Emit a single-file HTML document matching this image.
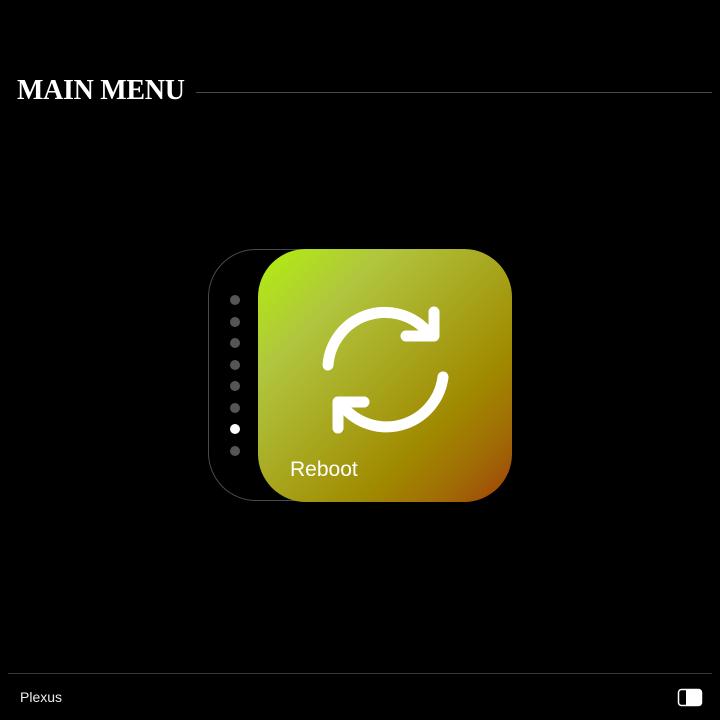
<!DOCTYPE html>
<html><head><meta charset="utf-8"><style>
html,body{margin:0;padding:0;background:#000;width:720px;height:720px;overflow:hidden;position:relative}
.title{position:absolute;left:17px;top:74px;font-family:"Liberation Serif",serif;font-weight:bold;font-size:28px;color:#fff;letter-spacing:-0.3px;line-height:34px}
.hl{position:absolute;left:196px;top:92px;width:516px;height:1px;background:#4a4a4a}
.back{position:absolute;left:208px;top:249px;width:160px;height:252px;border:1px solid #4a4a4a;border-radius:48px;box-sizing:border-box}
.dot{position:absolute;left:230px;width:10px;height:10px;border-radius:50%;background:#555}
.front{position:absolute;left:258px;top:249px;width:254px;height:253px;border-radius:48px;
background:linear-gradient(135deg,#b2f00c 0%,#b0c63e 25%,#a8a820 48%,#a08a00 70%,#a06a06 86%,#a03e08 100%)}
.reb{position:absolute;left:290px;top:458px;font-family:"Liberation Sans",sans-serif;font-size:21px;color:#fff}
.fl{position:absolute;left:8px;top:673px;width:704px;height:1px;background:#3a3a3a}
.plex{position:absolute;left:20px;top:689px;font-family:"Liberation Sans",sans-serif;font-size:14px;color:#eee}
</style></head><body>
<div class="title">MAIN MENU</div>
<div class="hl"></div>
<div class="back"></div>
<div class="dot" style="top:295px"></div>
<div class="dot" style="top:317px"></div>
<div class="dot" style="top:338px"></div>
<div class="dot" style="top:360px"></div>
<div class="dot" style="top:381px"></div>
<div class="dot" style="top:403px"></div>
<div class="dot" style="top:424px;background:#fff"></div>
<div class="dot" style="top:446px"></div>
<div class="front"></div>
<svg style="position:absolute;left:0;top:0" width="720" height="720">
<g fill="none" stroke="#fff" stroke-width="11" stroke-linecap="round" stroke-linejoin="round">
<path d="M328 365 A57 57 0 0 1 426 330"/>
<path d="M434 312 L434 336 L406 336"/>
<path d="M443 377 A57 57 0 0 1 346 410"/>
<path d="M338 428 L338 402 L364 402"/>
</g>
<rect x="678.5" y="689.5" width="23" height="16" rx="3" fill="none" stroke="#fff" stroke-width="1.5"/>
<path d="M686 689.5 H698.5 A3 3 0 0 1 701.5 692.5 V702.5 A3 3 0 0 1 698.5 705.5 H686 Z" fill="#fff"/>
</svg>
<div class="reb">Reboot</div>
<div class="fl"></div>
<div class="plex">Plexus</div>
</body></html>
